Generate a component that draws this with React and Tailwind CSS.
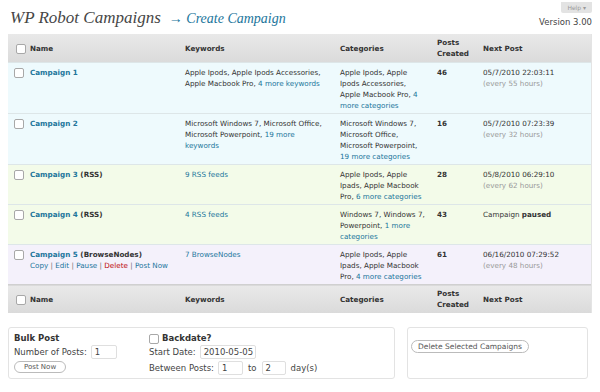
import React from "react";

const link = "text-[#21759b]";

function Box() {
  return <span className="inline-block h-[10px] w-[10px] rounded-[2px] border border-[#a8a8a8] bg-white align-middle" />;
}

function HeadRow({ top }) {
  const th = "px-[2px] py-[3px] text-left align-middle font-bold text-[#333]";
  return (
    <tr className={`h-[28px] bg-gradient-to-b from-[#e9e9e9] to-[#dadada] ${top ? "" : "border-t border-[#d0d0d0]"}`}>
      <th className="pl-[6px] align-middle">
        <Box />
      </th>
      <th className={th}>Name</th>
      <th className={th}>Keywords</th>
      <th className={th}>Categories</th>
      <th className={th}>
        Posts
        <br />
        Created
      </th>
      <th className={th}>Next Post</th>
    </tr>
  );
}

const rows = [
  {
    bg: "bg-[#eefafd]",
    name: "Campaign 1",
    kw: (
      <>
        Apple Ipods, Apple Ipods Accessories,
        <br />
        Apple Macbook Pro, <a className={link}>4 more keywords</a>
      </>
    ),
    cat: (
      <>
        Apple Ipods, Apple
        <br />
        Ipods Accessories,
        <br />
        Apple Macbook Pro, <a className={link}>4</a>
        <br />
        <a className={link}>more categories</a>
      </>
    ),
    posts: 46,
    next: "05/7/2010 22:03:11",
    every: "(every 55 hours)",
  },
  {
    bg: "bg-[#eefafd]",
    name: "Campaign 2",
    kw: (
      <>
        Microsoft Windows 7, Microsoft Office,
        <br />
        Microsoft Powerpoint, <a className={link}>19 more</a>
        <br />
        <a className={link}>keywords</a>
      </>
    ),
    cat: (
      <>
        Microsoft Windows 7,
        <br />
        Microsoft Office,
        <br />
        Microsoft Powerpoint,
        <br />
        <a className={link}>19 more categories</a>
      </>
    ),
    posts: 16,
    next: "05/7/2010 07:23:39",
    every: "(every 32 hours)",
  },
  {
    bg: "bg-[#f3fbe9]",
    name: "Campaign 3",
    tag: " (RSS)",
    kw: <a className={link}>9 RSS feeds</a>,
    cat: (
      <>
        Apple Ipods, Apple
        <br />
        Ipads, Apple Macbook
        <br />
        Pro, <a className={link}>6 more categories</a>
      </>
    ),
    posts: 28,
    next: "05/8/2010 06:29:10",
    every: "(every 62 hours)",
  },
  {
    bg: "bg-[#f3fbe9]",
    name: "Campaign 4",
    tag: " (RSS)",
    kw: <a className={link}>4 RSS feeds</a>,
    cat: (
      <>
        Windows 7, Windows 7,
        <br />
        Powerpoint, <a className={link}>1 more</a>
        <br />
        <a className={link}>categories</a>
      </>
    ),
    posts: 43,
    paused: true,
  },
  {
    bg: "bg-[#f4f1fb]",
    name: "Campaign 5",
    tag: " (BrowseNodes)",
    actions: true,
    kw: <a className={link}>7 BrowseNodes</a>,
    cat: (
      <>
        Apple Ipods, Apple
        <br />
        Ipads, Apple Macbook
        <br />
        Pro, <a className={link}>4 more categories</a>
      </>
    ),
    posts: 61,
    next: "06/16/2010 07:29:52",
    every: "(every 48 hours)",
  },
];

export default function App() {
  const td = "px-[2px] pt-[4px] pb-[2px] align-top whitespace-nowrap";
  return (
    <div className="h-[392px] w-[600px] overflow-hidden bg-white font-['DejaVu_Sans',sans-serif] text-[#333]">
      {/* Header */}
      <div className="flex h-[34px] justify-between px-[8px]">
        <div className="flex items-baseline gap-[8px] pl-[2px] pt-[8px]">
          <h1 className="font-['Liberation_Serif',serif] text-[17px] italic leading-[20px] text-[#464646]">WP Robot Campaigns</h1>
          <a className="font-['Liberation_Serif',serif] text-[14px] italic text-[#21759b]">→ Create Campaign</a>
        </div>
        <div className="flex flex-col items-end">
          <div className="mt-[2px] rounded-b-[2px] bg-[#e3e3e3] px-[6px] text-[6px] leading-[11px] text-[#999]">Help ▾</div>
          <div className="mt-[3px] text-[8.5px] leading-[12px] text-[#444]">Version 3.00</div>
        </div>
      </div>

      {/* Table */}
      <div className="mx-[8px] w-[584px] border-r border-[#e4e4e4]">
        <table className="w-full table-fixed border-collapse text-[7.2px] leading-[11px]">
          <colgroup>
            <col className="w-[20px]" />
            <col className="w-[155px]" />
            <col className="w-[155px]" />
            <col className="w-[97px]" />
            <col className="w-[46px]" />
            <col />
          </colgroup>
          <thead>
            <HeadRow top />
          </thead>
          <tbody>
            {rows.map((r) => (
              <tr key={r.name} className={`${r.bg} border-t border-[#dde6e8]`}>
                <td className="pl-[6px] pt-[4px] align-top">
                  <Box />
                </td>
                <td className={td}>
                  <a className={`font-bold ${link}`}>{r.name}</a>
                  {r.tag && <span className="font-bold">{r.tag}</span>}
                  {r.actions && (
                    <div className="text-[#777]">
                      <a className={link}>Copy</a> | <a className={link}>Edit</a> | <a className={link}>Pause</a> |{" "}
                      <a className="text-[#bc0b0b]">Delete</a> | <a className={link}>Post Now</a>
                    </div>
                  )}
                </td>
                <td className={td}>{r.kw}</td>
                <td className={td}>{r.cat}</td>
                <td className={`${td} font-bold`}>{r.posts}</td>
                <td className={td}>
                  {r.paused ? (
                    <>
                      Campaign <b>paused</b>
                    </>
                  ) : (
                    <>
                      {r.next}
                      <br />
                      <span className="text-[#999]">{r.every}</span>
                    </>
                  )}
                </td>
              </tr>
            ))}
          </tbody>
          <tfoot>
            <HeadRow />
          </tfoot>
        </table>
      </div>

      {/* Bottom boxes */}
      <div className="mx-[8px] mt-[14px] flex gap-[12px]">
        <div className="flex h-[52px] w-[387px] rounded-[3px] border border-[#e3e3e3] bg-white px-[5px] pt-[4px] text-[8.5px] leading-[13px] text-[#444]">
          <div className="w-[135px]">
            <div className="font-bold text-[#333]">Bulk Post</div>
            <div className="flex items-center">
              Number of Posts:
              <span className="ml-[4px] h-[14px] w-[26px] rounded-[2px] border border-[#dfdfdf] bg-white pl-[3px]">1</span>
            </div>
            <button className="mt-[2px] h-[12px] rounded-full border border-[#bbb] bg-white px-[9px] text-[7px] leading-[10px] text-[#555]">Post Now</button>
          </div>
          <div>
            <div className="flex items-center gap-[3px] font-bold text-[#333]">
              <Box />
              Backdate?
            </div>
            <div className="flex items-center">
              Start Date:
              <span className="ml-[4px] h-[14px] w-[56px] rounded-[2px] border border-[#dfdfdf] bg-white pl-[3px]">2010-05-05</span>
            </div>
            <div className="mt-[2px] flex items-center">
              Between Posts:
              <span className="ml-[4px] h-[14px] w-[25px] rounded-[2px] border border-[#dfdfdf] bg-white pl-[3px]">1</span>
              <span className="mx-[5px]">to</span>
              <span className="h-[14px] w-[24px] rounded-[2px] border border-[#dfdfdf] bg-white pl-[3px]">2</span>
              <span className="ml-[5px]">day(s)</span>
            </div>
          </div>
        </div>
        <div className="h-[52px] w-[181px] rounded-[3px] border border-[#e3e3e3] bg-white px-[3px] pt-[4px]">
          <button className="h-[13px] rounded-full border border-[#bbb] bg-white px-[6px] text-[7.5px] leading-[11px] text-[#555]">
            Delete Selected Campaigns
          </button>
        </div>
      </div>
    </div>
  );
}
